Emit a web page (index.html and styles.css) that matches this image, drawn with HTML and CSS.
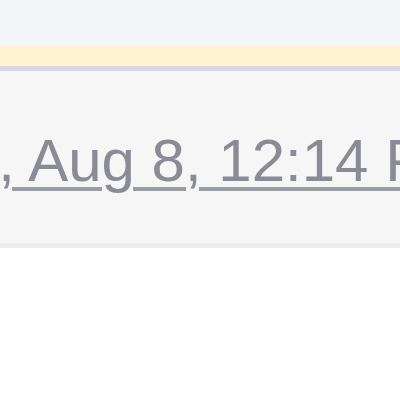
FILE: index.html
```html
<!DOCTYPE html>
<html lang="en">
<head>
  <meta charset="UTF-8">
  <title>Timestamp</title>
  <link rel="stylesheet" href="styles.css">
</head>
<body>
  <div class="topbar"></div>
  <div class="notice"></div>
  <div class="meta">
    <a class="stamp" href="#">Tue, Aug 8, 12:14 PM</a>
  </div>
  <div class="content"></div>
</body>
</html>
```
FILE: styles.css
```css
body {
  margin: 0;
  padding: 0;
  background: #fff;
  font-family: "Liberation Sans", Arial, sans-serif;
  overflow: hidden;
}
.topbar {
  height: 46px;
  background: #f4f5f8;
}
.notice {
  height: 20px;
  background: #fff4d2;
  border-bottom: 5px solid #d9d9df;
}
.meta {
  height: 112px;
  padding-top: 60px;
  background: #f6f6f6;
  border-bottom: 5px solid #ececf1;
  white-space: nowrap;
  overflow: hidden;
}
.stamp {
  display: inline-block;
  margin-left: -103px;
  font-size: 60px;
  line-height: 60px;
  color: #8a8b94;
  text-decoration: underline;
  text-decoration-color: #999ca1;
  text-decoration-thickness: 4px;
  text-underline-offset: 6px;
}
.content {
  height: 152px;
  background: #fff;
}
```
